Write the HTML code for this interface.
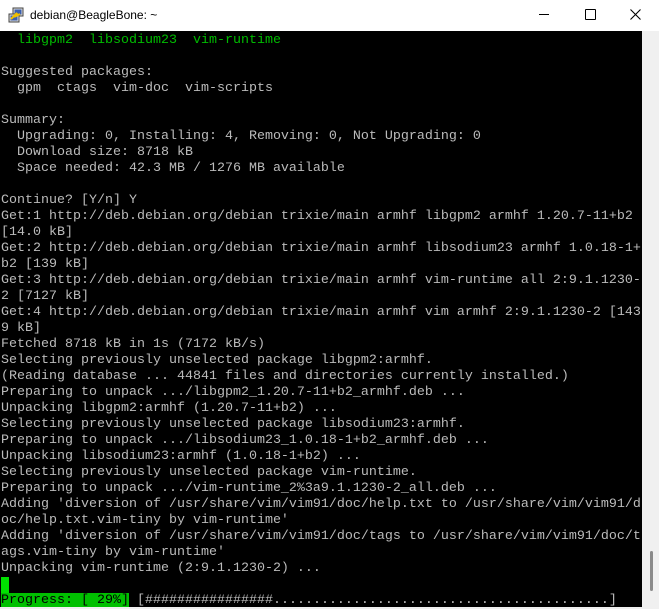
<!DOCTYPE html>
<html><head><style>
html,body{margin:0;padding:0;background:#f0f0f0;width:659px;height:609px;overflow:hidden}
#title{position:absolute;left:0;top:0;width:659px;height:31px;background:#fff;font-family:"Liberation Sans",sans-serif;font-size:12px;color:#000}
#title .t{position:absolute;left:30px;top:8px}
#term{position:absolute;left:0;top:31px;width:642px;height:576px;background:#000;overflow:hidden}
pre{margin:0;padding:2px 0 0 1px;font-family:"Liberation Mono",monospace;font-size:13.33px;line-height:16px;color:#bbb;white-space:pre}
.g{color:#00bb00}
.p{background:#00c000;color:#000}
.c{display:inline-block;width:8px;height:16px;background:#00e000;vertical-align:top}
#sb{position:absolute;left:642px;top:31px;width:17px;height:578px;background:#f0f0f0}
#thumb{position:absolute;left:650px;top:551px;width:3px;height:40px;background:#8a8a8a;border-radius:2px}
</style></head><body>
<div id="title">
<svg style="position:absolute;left:8px;top:7px" width="16" height="16" viewBox="0 0 16 16"><rect x="5" y="1" width="10" height="8" fill="#ddd" stroke="#444"/><rect x="6.5" y="2.5" width="7" height="5" fill="#3a5fb0"/><rect x="1" y="7" width="10" height="8" fill="#ddd" stroke="#444"/><rect x="2.5" y="8.5" width="7" height="5" fill="#3a5fb0"/><path d="M3 12 L9 6 L8 9 L12 7" stroke="#f0c000" stroke-width="2" fill="none"/></svg>
<span class="t">debian@BeagleBone: ~</span>
<div style="position:absolute;left:539px;top:14px;width:10px;height:1px;background:#000"></div>
<div style="position:absolute;left:585px;top:9px;width:9px;height:9px;border:1px solid #000;border-radius:1px"></div>
<svg style="position:absolute;left:630px;top:9px" width="11" height="11"><path d="M0.5 0.5 L10.5 10.5 M10.5 0.5 L0.5 10.5" stroke="#000" stroke-width="1.1"/></svg>
</div>
<div id="term"><pre><span class="g">  libgpm2  libsodium23  vim-runtime</span>

Suggested packages:
  gpm  ctags  vim-doc  vim-scripts

Summary:
  Upgrading: 0, Installing: 4, Removing: 0, Not Upgrading: 0
  Download size: 8718 kB
  Space needed: 42.3 MB / 1276 MB available

Continue? [Y/n] Y
Get:1 http://deb.debian.org/debian trixie/main armhf libgpm2 armhf 1.20.7-11+b2
[14.0 kB]
Get:2 http://deb.debian.org/debian trixie/main armhf libsodium23 armhf 1.0.18-1+
b2 [139 kB]
Get:3 http://deb.debian.org/debian trixie/main armhf vim-runtime all 2:9.1.1230-
2 [7127 kB]
Get:4 http://deb.debian.org/debian trixie/main armhf vim armhf 2:9.1.1230-2 [143
9 kB]
Fetched 8718 kB in 1s (7172 kB/s)
Selecting previously unselected package libgpm2:armhf.
(Reading database ... 44841 files and directories currently installed.)
Preparing to unpack .../libgpm2_1.20.7-11+b2_armhf.deb ...
Unpacking libgpm2:armhf (1.20.7-11+b2) ...
Selecting previously unselected package libsodium23:armhf.
Preparing to unpack .../libsodium23_1.0.18-1+b2_armhf.deb ...
Unpacking libsodium23:armhf (1.0.18-1+b2) ...
Selecting previously unselected package vim-runtime.
Preparing to unpack .../vim-runtime_2%3a9.1.1230-2_all.deb ...
Adding 'diversion of /usr/share/vim/vim91/doc/help.txt to /usr/share/vim/vim91/d
oc/help.txt.vim-tiny by vim-runtime'
Adding 'diversion of /usr/share/vim/vim91/doc/tags to /usr/share/vim/vim91/doc/t
ags.vim-tiny by vim-runtime'
Unpacking vim-runtime (2:9.1.1230-2) ...
<span class="c"></span>
<span class="p">Progress: [ 29%]</span> [################..........................................]</pre></div>
<div id="sb"></div><div id="thumb"></div>
</body></html>
